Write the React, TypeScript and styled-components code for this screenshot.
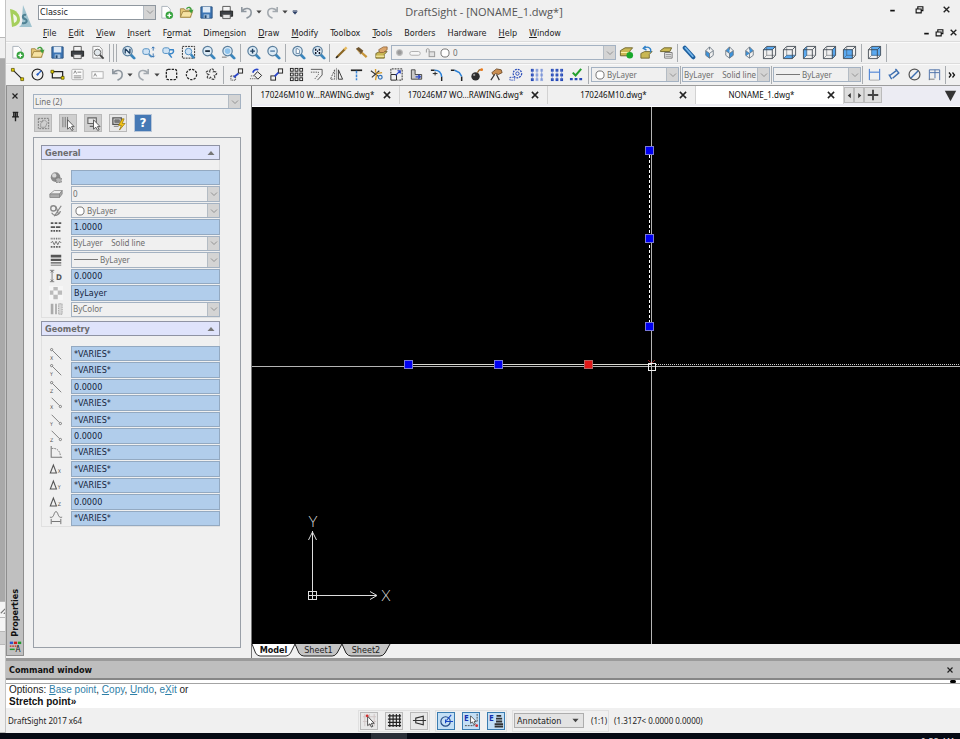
import React from 'react';
import styled, { createGlobalStyle, css } from 'styled-components';

const UI = '"DejaVu Sans Condensed", "DejaVu Sans", sans-serif';
const NARROW = '"Noto Sans", sans-serif';
const ARIAL = '"Liberation Sans", Arial, sans-serif';

const GlobalStyle = createGlobalStyle`
  *, *::before, *::after { box-sizing: border-box; }
  body { margin: 0; background: #f0f0f0; color: #222; font: 9px/12px ${UI}; }
  button, input, select { font: inherit; color: inherit; margin: 0; padding: 0; border-radius: 0; }
  button { background: none; border: 0; }
`;

/* ---------- icon drawings, 16 x 16 grid ---------- */

const dash = { fill: 'none', stroke: '#222', strokeDasharray: '2 1' };
const blueLine = { fill: 'none', stroke: '#2f6fd0' };

const Lens = ({ children }: { children?: React.ReactNode }) => (
  <g>
    <path d="M10.5 10.5 14 14" stroke="#3a86bd" strokeWidth="3" strokeLinecap="round" />
    <circle cx="7" cy="6.5" r="5" fill="#dcebf6" stroke="#5b7f9d" strokeWidth="1.3" />
    {children}
  </g>
);

const faces: Record<string, string> = {
  top: '2,5 5,2 14,2 11,5',
  bottom: '2,14 5,11 14,11 11,14',
  left: '2,5 5,2 5,11 2,14',
  right: '11,5 14,2 14,11 11,14',
  front: '2,5 11,5 11,14 2,14',
  back: '5,2 14,2 14,11 5,11',
};
const Cube = ({ face }: { face: string }) => (
  <g fill="none" stroke="#3a424b">
    <polygon points={faces[face]} fill="#5aa9f0" stroke="#5aa9f0" strokeWidth=".8" />
    <path d="M1.500 5h9.500v9.500H1.500zM1.500 5L5 1.500h9.500V11L11 14.500M11 5l3.500-3.500" strokeWidth=".9" />
    <path d="M5 2v9h9M5 11l-3.500 3.500" strokeWidth=".5" />
  </g>
);
const Iso = ({ fill }: { fill: string }) => (
  <g>
    <path d={fill} fill="#3c93dc" />
    <path d="M8 2l4 4v5l-4 3-4-3V6zM4 6l4 3 4-3M8 9v5M8 2v3" fill="none" stroke="#66727e" strokeWidth=".9" />
  </g>
);
const Dots = ({ first }: { first: string }) => (
  <g>
    {[2, 7, 12].map((x) =>
      [2, 7, 12].map((y) => <rect key={`${x}-${y}`} x={x} y={y} width="3" height="3" fill={x === 2 ? '#2448b8' : first} />),
    )}
    <path d="M3.500 2v12M8.500 2v12M13.500 2v12" stroke="#5b79c9" strokeWidth=".6" />
  </g>
);
const Pad = ({ fill = '#c9b753' }: { fill?: string }) => (
  <path d="M2 9l4-2h8l-3 3v4H2z" fill={fill} stroke="#6d6329" strokeWidth=".9" />
);
const NodeLine = ({ axis, end }: { axis: string; end: boolean }) => (
  <g fill="none" stroke="#666" strokeWidth=".9">
    <path d={end ? 'M3 2l9 9' : 'M4 4l10 10'} />
    <circle cx={end ? 13 : 3} cy={end ? 12 : 3} r="1.300" />
    <text x="1" y="14.500" fontSize="6" fill="#555" stroke="none">{axis}</text>
  </g>
);
const Delta = ({ axis }: { axis: string }) => (
  <g>
    <path d="M1.500 12.500L5 3.500l3.500 9z" fill="none" stroke="#555" strokeWidth="1.200" />
    <text x="10" y="13" fontSize="6" fill="#555">{axis}</text>
  </g>
);

const glyphs: Record<string, React.ReactNode> = {
  new: (<g><path d="M3 1.500h6l3 3V14H3z" fill="#fdfdfd" stroke="#aab2ba" /><circle cx="11" cy="11" r="4" fill="#37a33f" /><path d="M11 8.800v4.400M8.800 11h4.400" stroke="#fff" strokeWidth="1.400" /></g>),
  open: (<g><path d="M1.500 13V4h4l1 1.500h6V13z" fill="#e6c877" stroke="#a48a46" /><path d="M1.500 13l2.500-6h10.500L12 13z" fill="#f6e2a2" stroke="#a48a46" /><path d="M8 4c2-2.500 5-1.500 5 1.500" fill="none" stroke="#3f9d3c" strokeWidth="1.500" /><path d="M10.500 5h5L13 9z" fill="#3f9d3c" /></g>),
  save: (<g><path d="M2 2h12v12H2z" fill="#3c75b4" stroke="#2b5482" /><path d="M4 2h8v6H4z" fill="#dfeaf5" /><path d="M5 10h6v4H5z" fill="#a8c4df" /><path d="M6 11h2v3H6z" fill="#24486f" /></g>),
  print: (<g><path d="M4 1.500h8V7H4z" fill="#f4f4f4" stroke="#555" /><path d="M1.500 6.500h13V12h-13z" fill="#3b3f44" stroke="#222" /><path d="M4 10h8v4.500H4z" fill="#e4e4e4" stroke="#555" /></g>),
  preview: (<g><path d="M3 1.500h7l3 3V14H3z" fill="#fafafa" stroke="#999" /><circle cx="8" cy="8" r="3.500" fill="#e2e8ec" stroke="#666" /><path d="M10.500 10.500l4 4" stroke="#444" strokeWidth="2" /></g>),
  undo: <path d="M3 2v5h5M3 7c3-5 10-4 10 1 0 3-2 5-5 6" fill="none" stroke="#8f979f" strokeWidth="1.700" />,
  redo: <path d="M13 2v5H8M13 7C10 2 3 3 3 8c0 3 2 5 5 6" fill="none" stroke="#a3a9af" strokeWidth="1.700" />,
  zdyn: <Lens><path d="M4.500 4l5 5M9.500 4v5M4.500 4v5" stroke="#1d3d5e" strokeWidth="1.400" /></Lens>,
  zupdown: (<g><rect x="2" y="4" width="7" height="6" rx="2" fill="#cfe3f5" stroke="#4d8cc0" /><path d="M8.500 10l3 3" stroke="#4d8cc0" strokeWidth="2" /><path d="M13 2v4M13 9v4M11.500 3.500L13 2l1.500 1.500M11.500 11.500L13 13l1.500-1.500" stroke="#2f6fb0" fill="none" /></g>),
  zprev: (<g><rect x="2" y="3" width="7" height="6" rx="2" fill="#cfe3f5" stroke="#4d8cc0" /><path d="M9 9c4 1 5-2 4-4H9M8 9l3.500 4.500" stroke="#3a86c8" strokeWidth="1.600" fill="none" /></g>),
  zwin: (<g><rect x="1.500" y="1.500" width="13" height="12.500" {...dash} /><circle cx="8" cy="7" r="3.500" fill="#cfe3f5" stroke="#4d8cc0" /><path d="M10.500 10l3.500 4" stroke="#3a86bd" strokeWidth="2.500" /></g>),
  zout: <Lens><path d="M4.500 6.500h5" stroke="#123" strokeWidth="1.800" /></Lens>,
  zsel: <Lens><circle cx="7" cy="6.500" r="3" fill="#8ec3ec" /><path d="M1 13h5" stroke="#999" strokeWidth="1.500" /></Lens>,
  zin: <Lens><path d="M4.500 6.500h5M7 4v5" stroke="#1d3d5e" strokeWidth="1.500" /></Lens>,
  zout2: <Lens><path d="M4.500 6.500h5" stroke="#537ea6" strokeWidth="1.500" /></Lens>,
  zpage: <Lens><path d="M5.500 4h2l1.500 1.500V9H5.500z" fill="#fff" stroke="#4c6f92" strokeWidth=".8" /></Lens>,
  zfit: <Lens><path d="M5 4v2M5 7.500v2M9 4v2M9 7.500v2M6.500 6.700h1" stroke="#112" strokeWidth="1.600" /></Lens>,
  pencil: (<g><path d="M3 13L12 4" stroke="#8c6724" strokeWidth="2.400" /><path d="M11 5l2.500-2.500" stroke="#e6b95e" strokeWidth="2.500" /><path d="M2 14l2-2" stroke="#222" strokeWidth="1.500" /></g>),
  brush: (<g><path d="M8 8l5.500 5" stroke="#c79539" strokeWidth="2.500" /><path d="M2 4l3-2 5 4-3 4z" fill="#6f5530" /><path d="M3 5l4 4" stroke="#d9b774" /></g>),
  layer: (<g><Pad /><path d="M2 12h9" stroke="#efe39b" strokeWidth="1.500" /><path d="M5 5l5-3h4v3l-4 3H6z" fill="#dca66b" stroke="#8b5e31" strokeWidth=".8" /></g>),
  layerOk: (<g><path d="M1.500 6l5-3h8l-3 3.500v5h-10z" fill="#c9b753" stroke="#6d6329" /><path d="M2 8h9" stroke="#fff2b0" /><circle cx="11.500" cy="11" r="3.500" fill="#17a82b" /></g>),
  layerBack: (<g><Pad /><path d="M12 8c2-4-2-7-6-5M7 1L4.500 3.500 8 5.500" fill="none" stroke="#2f80c8" strokeWidth="1.400" /></g>),
  layerList: (<g><path d="M1.500 6l4-3h8l-2 4H1.500z" fill="#c9b753" stroke="#6d6329" /><path d="M6 8h8v6H6z" fill="#f1f1f1" stroke="#777" /><path d="M7 10h6M7 12h6" stroke="#888" /></g>),
  tube: (<g><path d="M3 3l9 10" stroke="#1d5f9e" strokeWidth="4.500" strokeLinecap="round" /><path d="M3.500 3l8 9" stroke="#74b6ec" strokeWidth="1.800" strokeLinecap="round" /></g>),
  isoL: <Iso fill="M4 6l4 3v5l-4-3z" />,
  isoT: <Iso fill="M8 2v7L4 6zM8 9l4-3v5l-4 3z" />,
  isoR: <Iso fill="M8 2l4 4-4 3zM4 6l4 3-4 3z" />,
  cubeTop: <Cube face="top" />, cubeBottom: <Cube face="bottom" />, cubeLeft: <Cube face="left" />,
  cubeRight: <Cube face="right" />, cubeFront: <Cube face="front" />, cubeBack: <Cube face="back" />,
  line: (<g><path d="M3 3l10 10" stroke="#222" strokeWidth="1.200" /><path d="M1.500 1.500h3v3h-3zM11.500 11.500h3v3h-3z" fill="#e8d400" stroke="#554d00" strokeWidth=".8" /></g>),
  circle: (<g fill="none"><circle cx="8" cy="8" r="5.800" stroke="#222" strokeWidth="1.200" /><path d="M8 8l4-4" stroke="#2a62c8" strokeWidth="1.400" /><path d="M6.500 8L8 6.500 9.500 8 8 9.500z" fill="#2a62c8" /></g>),
  rect: (<g><path d="M2.500 5h11v6.500h-11z" fill="none" stroke="#222" strokeWidth="1.300" /><path d="M1 3.500h3v3H1zM12 10h3v3h-3z" fill="#e8d400" stroke="#554d00" strokeWidth=".8" /></g>),
  note: (<g><rect x="2" y="2.500" width="12" height="11" rx="1" fill="#fbfbfb" stroke="#b0b0b0" /><path d="M4 7l1.500-3L7 7M8 5.500h4M4 9.500h8M4 11.500h8" stroke="#888" fill="none" /></g>),
  snote: (<g><rect x="2" y="5" width="12" height="7" fill="#fbfbfb" stroke="#b0b0b0" /><path d="M4 10l1.500-3L7 10" stroke="#888" fill="none" /></g>),
  selRect: <rect x="2.500" y="2.500" width="11" height="11" rx="2" {...dash} strokeDasharray="2.500 1.200" strokeWidth="1.400" />,
  selCirc: <circle cx="8" cy="8" r="5.500" {...dash} strokeDasharray="2.500 1.200" strokeWidth="1.300" />,
  selPoly: <path d="M6 5c0-4 5-4 4 0 4-1 5 3 1 4 2 4-2 6-4 2-3 3-5 0-2-3-4-1-3-5 1-3z" fill="none" stroke="#444" strokeWidth="1.300" strokeDasharray="3 1" />,
  move: (<g><rect x="10" y="2" width="4.500" height="4.500" fill="none" stroke="#222" /><rect x="2" y="9.500" width="5" height="4.500" {...dash} strokeDasharray="1 1" /><path d="M5 11l5-4" stroke="#2a46c8" strokeWidth="2" /></g>),
  rotate: (<g><path d="M9 5l4.500 4L9.500 13l-4-4z" fill="none" stroke="#222" /><path d="M4 6c1-3 4-4 6-3" stroke="#2a46c8" strokeWidth="1.800" fill="none" /><path d="M1 12.500h7M2 9.500h3" stroke="#444" strokeDasharray="1 1" /></g>),
  copy: (<g fill="none"><rect x="10" y="2" width="4.500" height="4.500" stroke="#222" /><rect x="2" y="9.500" width="5" height="4.500" stroke="#222" /><path d="M6 10l4-4" stroke="#2a46c8" strokeWidth="2" /></g>),
  pattern: (<g fill="none" stroke="#222">{[2, 7, 12].map((x) => [2, 7, 12].map((y) => <rect key={`${x}${y}`} x={x - 0.5} y={y - 0.5} width="3" height="3" />))}</g>),
  offset: (<g fill="none"><path d="M2 2.500h12v6L9 14" stroke="#555" /><path d="M2 5.500h8V8l-4 5" {...dash} stroke="#555" strokeDasharray="1.500 1" /></g>),
  mirror: (<g fill="none"><path d="M6 3v10H1.500z" {...dash} stroke="#555" /><path d="M10 3v10h4.500z" stroke="#333" /><path d="M8 1v13" stroke="#999" /></g>),
  tee: (<g><path d="M2 3.500h12" stroke="#222" strokeWidth="1.800" /><path d="M8 4v10" stroke="#3a86d8" strokeWidth="1.600" strokeDasharray="3 1" /></g>),
  scissors: (<g fill="none"><path d="M2 4l8 6M3 11l8-7" stroke="#333" strokeWidth="1.200" /><circle cx="12" cy="11" r="2" stroke="#3272b8" strokeWidth="1.300" /><path d="M8 7l6-1M8 8l-1 6M7 2v4" stroke="#d39a2a" strokeWidth="1.500" /></g>),
  scale: (<g fill="none"><path d="M2 7V2h12v12H9" {...dash} /><path d="M2 8h6v6H2z" stroke="#222" /><path d="M7 9l5-5M9 4h3v3" stroke="#2a46c8" strokeWidth="1.300" /></g>),
  stretch: (<g><path d="M2.500 3h4v5h7v5h-11z" fill="#c9c9c9" stroke="#444" /><path d="M7 10.500h5M10 8.500l2 2-2 2" stroke="#2a46c8" fill="none" strokeWidth="1.300" /></g>),
  fillet: (<g fill="none" strokeWidth="1.500"><path d="M2 3.500h4M13.500 10v5" stroke="#222" /><path d="M6 3.500c5 0 7 2 7.500 7" stroke="#2c82d8" /><path d="M4 7h5M6.500 5v4" stroke="#222" strokeWidth="1" /></g>),
  chamfer: (<g fill="none" strokeWidth="1.600"><path d="M2 3.500h4M13.500 10v5" stroke="#222" /><path d="M6 3.500l5 2.500 2.500 4" stroke="#2c82d8" /></g>),
  bomb: (<g><circle cx="7" cy="10" r="4.500" fill="#2d2d2d" /><path d="M9 6l2-3h2" stroke="#8a5a1c" fill="none" strokeWidth="1.300" /><circle cx="13.500" cy="2.800" r="1.500" fill="#ea7a1b" /><circle cx="5.500" cy="8.500" r="1.200" fill="#999" /></g>),
  hand: (<g><path d="M3 6l5-4 5 1 1 3-4 2-3-1-2 2z" fill="#c98e52" stroke="#5c3a18" strokeWidth=".8" /><path d="M6 8l-4 6M8 8l3 6" stroke="#333" strokeWidth="1.300" /></g>),
  target: (<g fill="none" stroke="#2448b8"><circle cx="9" cy="7" r="4.500" strokeDasharray="2 1" strokeWidth="1.300" /><circle cx="9" cy="7" r="1.800" /><path d="M1 11h5v3H1z" strokeDasharray="1.500 1" /></g>),
  dotsA: <Dots first="#9fb2e2" />,
  dotsB: <Dots first="#2448b8" />,
  check: (<g><path d="M4 6l3 3 6-7" fill="none" stroke="#23a12e" strokeWidth="2.200" /><path d="M1 13h3M6 13h3M11 13h3" stroke="#2448b8" strokeWidth="2.500" /></g>),
  dimH: (<g {...blueLine}><path d="M2.500 2v12M13.500 2v12M3 5.500h10" /><path d="M3 14h10" stroke="#aaa" /></g>),
  dimA: (<g {...blueLine}><path d="M2 8l3 5M9 2l4 5M3 9l8-6M6 12l7-6" stroke="#3c6eb0" strokeWidth="1.500" /></g>),
  dimD: (<g fill="none"><circle cx="8" cy="8" r="5.800" stroke="#555" strokeWidth="1.300" /><path d="M4 12l8-8" stroke="#3c6eb0" strokeWidth="1.500" /></g>),
  dimO: (<g {...blueLine}><path d="M2.500 14V3h11v11M8.500 3v9M3 6h10" stroke="#4b6fa8" /><path d="M8 13H2" stroke="#777" /></g>),
  grid: <path d="M3 1v14M6.500 1v14M10 1v14M13.500 1v14M1 3h14M1 6.500h14M1 10h14M1 13.500h14" stroke="#222" strokeWidth="1.200" fill="none" />,
  snap: (<g><path d="M3 1v13M8 1v13M13 1v13M1 4h14M1 9h14" stroke="#cfc4c4" /><path d="M6 3.500v10l2.500-2 1.500 3.500 1.500-.7L10 11h3z" fill="#fff" stroke="#333" strokeWidth=".9" /><circle cx="5.500" cy="3" r="1.500" fill="#d23030" /></g>),
  ortho: (<g fill="none" stroke="#333"><path d="M4 5.500l8-2v9l-8-2zM1 8h14" strokeWidth="1.200" /></g>),
  polar: (<g fill="none"><circle cx="7" cy="9" r="5" stroke="#234a86" strokeWidth="1.200" /><path d="M7 9h8M8 8l5-6M7 7v4" stroke="#1746c6" strokeWidth="1.200" /></g>),
  esnap: (<g><text x="0" y="8" fontSize="9" fontWeight="bold" fill="#1530b0">E</text><path d="M7 3v8l2-1.500 1.500 3 1.500-.7-1.200-2.800H13z" fill="#fff" stroke="#333" strokeWidth=".8" /><path d="M1 13.500h10M14 1v9" stroke="#444" strokeDasharray="2 1" /><circle cx="13.500" cy="13.500" r="1.500" fill="#d23030" /></g>),
  etrack: (<g><text x="0" y="8" fontSize="9" fontWeight="bold" fill="#1530b0">E</text><path d="M8 3h5M7.500 6H14M7.500 9H14M6 12h9M6 14.500h9" stroke="#333" strokeWidth="2" /></g>),
  pickAdd: (<g><rect x="2.500" y="2.500" width="11" height="11" fill="none" stroke="#777" strokeDasharray="2 1" /><path d="M4 6h3V4M9 4l3 3-2 5H5V8z" fill="none" stroke="#999" /></g>),
  pickLines: (<g><path d="M2 1v11M4.500 1v11M7 1v5" stroke="#777" /><path d="M7 4v10l2.500-2 2 3.500 1.500-.8-1.800-3.400H14z" fill="#fff" stroke="#555" /></g>),
  pickMon: (<g><path d="M2 2h9v6H2zM4 11h4" fill="#e3e3e3" stroke="#666" strokeWidth="1.200" /><path d="M8 4v10l2.500-2 2 3.500 1.500-.8-1.800-3.400H15z" fill="#fff" stroke="#555" /></g>),
  flash: (<g><path d="M2 2h9v7H2z" fill="#e3e3e3" stroke="#555" strokeWidth="1.400" /><path d="M4 4h5v3H4zM3 11h5" fill="#777" stroke="#777" /><path d="M12 3L8 10h3l-2 5 6-7h-3l2-5z" fill="#f5c518" stroke="#8d6c00" strokeWidth=".7" /></g>),
  ball: (<g><circle cx="7.500" cy="7" r="5.500" fill="#8a8a8a" /><circle cx="6" cy="5" r="2.500" fill="#d8d8d8" /><path d="M8 8h6v5H8z" fill="#b5b5b5" stroke="#777" strokeDasharray="2 1" /></g>),
  slab: (<g><path d="M1 8l5-4h9l-3 4z" fill="#eee" stroke="#999" /><path d="M1 8h11v4H1zM12 8l3-4v4l-3 4z" fill="#aaa" stroke="#888" /></g>),
  palette: (<g fill="none" stroke="#888"><circle cx="5" cy="5" r="3" strokeWidth="1.500" /><path d="M14 2L6 14M8 3l3 9M3 10c3 5 9 3 10-2" strokeWidth="1.400" /></g>),
  ltScale: (<g stroke="#555" strokeWidth="2"><path d="M2 3.500h12" strokeDasharray="3 1.500" /><path d="M2 8h12" strokeDasharray="5 1" /><path d="M2 12.500h12" strokeDasharray="2 1" /></g>),
  ltype: (<g fill="none" stroke="#666"><path d="M2 3h12" strokeDasharray="1 1" strokeWidth="2" /><path d="M2 8l2-2 2 4 2-4 2 4 2-4 2 2" /><path d="M2 12.500h12" strokeDasharray="2 1" strokeWidth="2" /></g>),
  weight: <path d="M2 2h12v3H2zM2 6.500h12v2.500H2zM2 10.500h12v1.500H2zM2 13.300h12v1H2z" fill="#555" />,
  thick: (<g><path d="M1 1.500h5M1 14.500h5M3.500 2v12M2 4l1.500-2L5 4M2 12l1.500 2L5 12" stroke="#777" fill="none" /><text x="8" y="12" fontSize="9" fontWeight="bold" fill="#555">D</text></g>),
  checker: (<g fill="#bbb"><rect width="16" height="16" fill="#f6f6f6" /><path d="M5 1h5v4H5zM1 5h4v5H1zM10 5h5v5h-5zM5 10h5v5H5z" /></g>),
  bars: (<g><path d="M2 2h3v12H2zM7 2h2v12H7z" fill="#aaa" /><path d="M11 14V2h4v12z" fill="#d6d6d6" stroke="#888" strokeDasharray="1 1" /></g>),
  angle: (<g fill="none" stroke="#777"><path d="M2.500 1v13H15" strokeWidth="1.200" /><path d="M3 4c6-1 10 3 10 9" strokeDasharray="2 1" /></g>),
  length: (<g fill="none" stroke="#666"><path d="M1 7c3 1 4-1 5-4 1-3 3-3 4 0 1 3 2 5 5 4" /><path d="M2.500 9v6M13.500 9v6M3 12h10" /></g>),
  props: (<g><path d="M1 2h4v3H1z" fill="#2b56d0" /><path d="M6 2h4v3H6z" fill="#cc1f1f" /><path d="M11 2h4v3h-4z" fill="#1f9a2c" /><path d="M1 7.500h9" stroke="#cc1f1f" strokeWidth="1.500" strokeDasharray="2 1" /><path d="M1 11.500h6" stroke="#1f9a2c" strokeWidth="1.800" /><text x="8" y="15" fontSize="10" fill="#111">A</text></g>),
  pin: <path d="M4 2h8M5.500 2v6M10.500 2v6M8 2v6M3 8.500h10M8 9v6" stroke="#222" strokeWidth="2" fill="none" />,
  close: <path d="M3 3l10 10M13 3L3 13" stroke="#222" strokeWidth="2.400" fill="none" />,
  min: <path d="M4 10h8" stroke="#111" strokeWidth="3" />,
  restore: <path d="M5 6V3h9v7h-3M2 7h9v7H2z" fill="none" stroke="#111" strokeWidth="2" />,
  plus: <path d="M8 1v14M1 8h14" stroke="#444" strokeWidth="2.500" />,
  left: <path d="M11 2v12L4 8z" fill="#333" />,
  right: <path d="M5 2v12l7-6z" fill="#333" />,
  down: <path d="M1 4h14l-7 8z" fill="#444" />,
  bigDown: <path d="M1 2h14L8 15z" fill="#333" />,
  up: <path d="M1 12h14L8 4z" fill="#777" />,
  chev: <path d="M2 5l6 6 6-6" fill="none" stroke="currentColor" strokeWidth="1.800" />,
  more: <path d="M2 3l4 5-4 5M9 3l4 5-4 5" fill="none" stroke="#111" strokeWidth="2.500" />,
  overflow: <path d="M2 4h12M2 7h12l-6 7z" fill="#2b3f66" stroke="#2b3f66" strokeWidth="1.500" />,
  ring: <circle cx="8" cy="8" r="6.500" fill="#fff" stroke="#666" strokeWidth="1.400" />,
  bulb: <circle cx="8" cy="8" r="5" fill="#999" stroke="#bbb" strokeWidth="2" />,
  cloud: <rect x="1" y="6" width="14" height="5" rx="2.500" fill="#f6f6f6" stroke="#aaa" strokeWidth="1.200" />,
  lock: (<g fill="none" stroke="#999" strokeWidth="1.400"><path d="M2 8V4c0-2 4-2 4 0v3" /><rect x="6" y="7" width="8" height="7" fill="#e2e2e2" /></g>),
  grip: <path d="M1 15L15 1M5 16L16 5" stroke="#777" strokeWidth="1.500" />,
};

[['x', 'X'], ['y', 'Y'], ['z', 'Z']].forEach(([k, axis]) => {
  glyphs[`start-${k}`] = <NodeLine axis={axis} end={false} />;
  glyphs[`end-${k}`] = <NodeLine axis={axis} end />;
  glyphs[`delta-${k}`] = <Delta axis={axis} />;
});

const Svg = styled.svg<{ $s: number }>`
  display: block;
  flex: none;
  width: ${(p) => p.$s}px;
  height: ${(p) => p.$s}px;
`;
const Icon = ({ name, size = 15 }: { name: string; size?: number }) => (
  <Svg $s={size} viewBox="0 0 16 16" aria-hidden="true">{glyphs[name]}</Svg>
);

/* ---------- shared parts ---------- */

const Row = styled.div`
  display: flex;
  align-items: center;
`;
const Tool = styled.button<{ $w?: number }>`
  flex: none;
  width: ${(p) => p.$w ?? 20}px;
  height: 20px;
  display: grid;
  place-items: center;
  &:hover { background: #dce8f4; }
`;
const Rule = styled.span<{ $m?: number }>`
  flex: none;
  width: 1px;
  height: 18px;
  margin: 0 ${(p) => p.$m ?? 1}px;
  background: #a9adb1;
`;
const ComboBox = styled.span<{ $w?: number; $dark?: boolean }>`
  display: flex;
  align-items: center;
  flex: ${(p) => (p.$w ? `0 0 ${p.$w}px` : '1 1 auto')};
  min-width: 0;
  height: 15px;
  border: 1px solid ${(p) => (p.$dark ? '#8f979f' : '#a4b2c2')};
  background: ${(p) => (p.$dark ? '#fff' : '#f0f0f0')};
  color: ${(p) => (p.$dark ? '#222' : '#6e6e6e')};
  select {
    flex: 1;
    min-width: 0;
    height: 100%;
    padding-left: 1px;
    border: 0;
    background: none;
    appearance: none;
    outline: none;
    ${(p) => !p.$dark && css`font: 8px/12px ${NARROW};`}
  }
`;
const SelectionCombo = styled(ComboBox)`
  flex: none;
`;
const ComboArrow = styled.span`
  flex: none;
  width: 12px;
  height: 100%;
  display: grid;
  place-items: center;
  background: #d4d4d4;
  border-left: 1px solid #b4bcc4;
  color: #8b8b8b;
`;
const Stroke = styled.span`
  flex: none;
  width: 24px;
  height: 1px;
  margin: 0 1px 0 2px;
  background: #777;
`;
type ComboProps = { label: string; value: string; w?: number; dark?: boolean; lead?: React.ReactNode };
const Combo = ({ label, value, w, dark, lead }: ComboProps) => (
  <ComboBox $w={w} $dark={dark}>
    {lead}
    <select aria-label={label}><option>{value}</option></select>
    <ComboArrow><Icon name="chev" size={8} /></ComboArrow>
  </ComboBox>
);
const Tools = ({ names }: { names: string[] }) => (
  <>{names.map((n, i) => <Tool key={i} aria-label={n}><Icon name={n} /></Tool>)}</>
);

/* ---------- frame ---------- */

const Page = styled.div`
  display: flex;
  flex-direction: column;
  min-height: 100vh;
`;
const Desktop = styled.div`
  flex: 1;
  display: flex;
`;
const Sliver = styled.div`
  flex: none;
  width: 6px;
  display: grid;
  grid-template-rows: 38px 21px 1fr 16px 14px 13px 88px;
  border-right: 1px solid #c4c4c4;
  background: #f4f4f4;
  overflow: hidden;
`;
const SliverPart = styled.span<{ $bg: string }>`
  background: ${(p) => p.$bg};
  border-bottom: 1px solid #b8b8b8;
`;
const AppWindow = styled.div`
  flex: 1;
  min-width: 0;
  display: flex;
  flex-direction: column;
  background: #f0f0f0;
`;
const Header = styled.header`
  display: grid;
  grid-template-columns: 31px 1fr;
`;
const Logo = styled.svg`
  width: 24px;
  height: 25px;
  margin: 5px 0 0 3px;
`;
const TitleRow = styled.div`
  display: grid;
  grid-template-columns: 1fr auto 1fr;
  align-items: center;
  height: 24px;
  margin-left: -31px;
  padding-left: 32px;
`;
const Quick = styled(Row)`
  height: 22px;
  margin-right: -20px;
`;
const Title = styled.h1`
  margin: 0 30px 0 0;
  font: 11px/20px "Open Sans", sans-serif;
  color: #555;
`;
const Controls = styled(Row)`
  justify-content: flex-end;
  margin-left: auto;
  height: 18px;
`;
const WindowControls = styled(Controls)`
  align-self: start;
`;
const MenuRow = styled(Row)`
  height: 17px;
`;
const MenuItem = styled.button`
  padding: 0 6px;
  height: 17px;
  white-space: pre;
`;
const ToolRow = styled(Row)`
  height: 22px;
  padding-left: 1px;
  border-top: 1px solid #dcdcdc;
  box-shadow: inset 0 1px #fafafa;
`;
const Workspace = styled.div`
  flex: 1;
  display: flex;
  border-top: 1px solid #9c9c9c;
`;

/* ---------- properties palette ---------- */

const Strip = styled.div`
  flex: none;
  width: 18px;
  margin-bottom: 2px;
  display: flex;
  flex-direction: column;
  align-items: center;
  background: #c0c0c0;
  border: 1px solid #8e8e8e;
  border-top: 0;
`;
const StripTitle = styled.span`
  margin-top: auto;
  writing-mode: vertical-rl;
  rotate: 180deg;
  font-weight: bold;
  color: #111;
`;
const StripMenu = styled(Tool)`
  height: 18px;
`;
const Palette = styled.section`
  flex: none;
  width: 227px;
  display: flex;
  flex-direction: column;
  padding: 8px 10px 10px 9px;
`;
const PickRow = styled(Row)`
  gap: 7px;
  padding: 5px 0 5px 1px;
`;
const Square = styled.button<{ $on?: boolean; $plain?: boolean }>`
  flex: none;
  width: 18px;
  height: 18px;
  display: grid;
  place-items: center;
  background: ${(p) => (p.$on ? '#c4dff5' : p.$plain ? '#e8e8e8' : '#cfcfcf')};
  border: 1px solid ${(p) => (p.$on ? '#3a7cb0' : '#b9b9b9')};
`;
const Help = styled(Square)`
  background: #4679b5;
  border: 1px solid #b8c6d8;
  color: #fff;
  font: bold 12px/14px "DejaVu Sans", sans-serif;
`;
const PaletteBox = styled.div`
  flex: 1;
  border: 1px solid #9aa0a8;
  padding: 7px 20px 0 7px;
  display: flex;
  flex-direction: column;
  gap: 3px;
`;
const Group = styled.section`
  border: 1px solid #e0e0e0;
  border-top: 0;
`;
const GroupHead = styled.button`
  width: calc(100% + 2px);
  height: 15px;
  margin: 0 -1px;
  padding: 0 4px 0 3px;
  display: flex;
  align-items: center;
  justify-content: space-between;
  background: #dfe3fb;
  border: 1px solid #8f93a4;
  font-weight: bold;
  color: #6c6c6c;
`;
const Fields = styled.div<{ $h: number }>`
  display: grid;
  grid-auto-rows: 1fr;
  row-gap: 1px;
  height: ${(p) => p.$h}px;
  margin: 10px -1px 0 0;
`;
const Field = styled.label`
  display: grid;
  grid-template-columns: 29px 1fr;
  align-items: stretch;
  min-height: 0;
  > svg { align-self: center; margin-left: 7px; }
  > input {
    width: 100%;
    min-width: 0;
    padding: 0 2px;
    background: #b1cdeb;
    border: 1px solid #93a9c1;
    color: #14243c;
    outline: none;
  }
  > span { height: 100%; }
`;

type FieldSpec = { icon: string; label: string; value: string; combo?: boolean; lead?: React.ReactNode };
const LINE_STYLE = 'ByLayer\u00a0\u00a0\u00a0 Solid line';
const general: FieldSpec[] = [
  { icon: 'ball', label: 'Hyperlink', value: '' },
  { icon: 'slab', label: 'Layer', value: '0', combo: true },
  { icon: 'palette', label: 'Color', value: 'ByLayer', combo: true, lead: 'ring' },
  { icon: 'ltScale', label: 'Line scale', value: '1.0000' },
  { icon: 'ltype', label: 'Line style', value: LINE_STYLE, combo: true },
  { icon: 'weight', label: 'Line weight', value: 'ByLayer', combo: true, lead: 'stroke' },
  { icon: 'thick', label: 'Thickness', value: '0.0000' },
  { icon: 'checker', label: 'Transparency', value: 'ByLayer' },
  { icon: 'bars', label: 'Print style', value: 'ByColor', combo: true },
];
const V = '*VARIES*';
const geometry: FieldSpec[] = [
  { icon: 'start-x', label: 'Start X', value: V },
  { icon: 'start-y', label: 'Start Y', value: V },
  { icon: 'start-z', label: 'Start Z', value: '0.0000' },
  { icon: 'end-x', label: 'End X', value: V },
  { icon: 'end-y', label: 'End Y', value: V },
  { icon: 'end-z', label: 'End Z', value: '0.0000' },
  { icon: 'angle', label: 'Angle', value: V },
  { icon: 'delta-x', label: 'Delta X', value: V },
  { icon: 'delta-y', label: 'Delta Y', value: V },
  { icon: 'delta-z', label: 'Delta Z', value: '0.0000' },
  { icon: 'length', label: 'Length', value: V },
];
const Lead = styled.span`
  margin: 0 1px 0 3px;
`;
const LayerState = styled(Row)`
  gap: 4px;
  margin-right: 2px;
`;
const ring = <Lead><Icon name="ring" size={10} /></Lead>;

const PropertyGroup = ({ title, items, height }: { title: string; items: FieldSpec[]; height: number }) => (
  <Group>
    <GroupHead>{title}<Icon name="up" size={8} /></GroupHead>
    <Fields $h={height}>
      {items.map((f) => (
        <Field key={f.label}>
          <Icon name={f.icon} size={14} />
          {f.combo
            ? <Combo label={f.label} value={f.value} lead={f.lead === 'ring' ? ring : f.lead === 'stroke' ? <Stroke /> : undefined} />
            : <input aria-label={f.label} defaultValue={f.value} />}
        </Field>
      ))}
    </Fields>
  </Group>
);

/* ---------- documents ---------- */

const Docs = styled.main`
  flex: 1;
  min-width: 0;
  display: flex;
  flex-direction: column;
  border-left: 1px solid #777;
`;
const TabRow = styled(Row)`
  height: 21px;
  padding-bottom: 2px;
  background: #ececf3;
  border-bottom: 1px solid #fff;
`;
const DocTab = styled.div<{ $active?: boolean }>`
  flex: 0 1 148px;
  height: 100%;
  display: flex;
  align-items: center;
  background: ${(p) => (p.$active ? '#fff' : '#f0f0f0')};
  border-right: 1px solid #d2d2d2;
`;
const DocName = styled.button`
  flex: 1;
  min-width: 0;
  padding-left: 4px;
  white-space: nowrap;
  font: 8px/14px ${NARROW};
  color: #111;
`;
const CloseTab = styled.button`
  width: 20px;
  height: 16px;
  padding-right: 4px;
  display: grid;
  place-items: center;
`;
const NavTab = styled.button<{ $w: number }>`
  width: ${(p) => p.$w}px;
  height: 16px;
  display: grid;
  place-items: center;
  background: #dedede;
  border: 1px solid #bbb;
`;
const TabList = styled.button`
  margin: 0 3px 0 auto;
`;
const Drawing = styled.div`
  flex: 1;
  min-height: 0;
  background: #000;
  display: grid;
  svg { width: 100%; height: 100%; display: block; }
`;
const SheetRow = styled.div`
  display: flex;
  height: 14px;
`;
const Sheet = styled.button<{ $w: number; $active?: boolean }>`
  position: relative;
  width: ${(p) => p.$w}px;
  height: 12px;
  line-height: 13px;
  ${(p) => p.$active && css`font-weight: bold; color: #111;`}
  svg { position: absolute; inset: 0; width: 100%; height: 100%; overflow: visible; }
  span { position: relative; }
`;

const Grip = ({ x, y, hot }: { x: number; y: number; hot?: boolean }) => (
  <rect x={x - 4} y={y - 4} width="8" height="8" fill={hot ? '#e01818' : '#0000f0'} stroke={hot ? '#b86060' : '#7878d8'} />
);
const ModelView = () => (
  <Drawing>
    <svg role="img" aria-label="Model drawing" shapeRendering="crispEdges">
      <g stroke="#b4b4b4">
        <line x1="399.5" y1="0" x2="399.5" y2="100%" />
        <line x1="0" y1="259.5" x2="100%" y2="259.5" />
      </g>
      <line x1="397.5" y1="43" x2="397.5" y2="219" stroke="#fff" strokeDasharray="3 2" />
      <line x1="156" y1="257.5" x2="400" y2="257.5" stroke="#d8d8d0" />
      <line x1="404" y1="257.5" x2="100%" y2="257.5" stroke="#ccc" strokeDasharray="1 1" />
      <Grip x={397.5} y={43.5} /><Grip x={397.5} y={131.5} /><Grip x={397.5} y={219.5} />
      <Grip x={156.5} y={257.5} /><Grip x={246.5} y={257.5} /><Grip x={336.5} y={257.5} hot />
      <path d="M396 253l3 3M403 253l-3 3" stroke="#8c2020" />
      <rect x="396.5" y="256.5" width="7" height="7" fill="none" stroke="#eee" />
      <g stroke="#ddd" fill="none">
        <path d="M60.500 493V424M56 488.500h68M56.500 484.500h8v8h-8z" />
        <path d="M56.500 433l4-8 4 8M118 484.500l7 4-7 4" shapeRendering="auto" />
      </g>
      <g fill="#ddd" fontFamily="Lato, sans-serif" fontSize="15" fontWeight="300" textAnchor="middle">
        <text x="61" y="420">Y</text>
        <text x="134" y="494">X</text>
      </g>
    </svg>
  </Drawing>
);

/* ---------- command window and status bar ---------- */

const CommandHead = styled.div`
  display: flex;
  align-items: center;
  justify-content: space-between;
  height: 22px;
  padding: 0 3px;
  background: #bebebe;
  border-top: 3px solid #9a9a9a;
  border-bottom: 2px solid #868686;
  color: #111;
  font: bold 9px/16px ${UI};
`;
const Splitter = styled.div`
  height: 4px;
  background: #fff;
  border-bottom: 1px solid #a4a4a4;
  display: flex;
  justify-content: flex-end;
  padding-right: 4px;
  &::after { content: ''; width: 6px; height: 3px; border-radius: 2px; background: #000; }
`;
const CommandLog = styled.div`
  height: 24px;
  padding-left: 3px;
  background: #fff;
  font: 10px/12px ${ARIAL};
  color: #222;
  a { color: #2f80a8; text-decoration: none; }
  p { margin: 0; }
  strong { color: #111; }
`;
const Status = styled.footer`
  display: flex;
  align-items: center;
  height: 25px;
  font: 8px/12px ${NARROW};
`;
const StatusText = styled.span`
  flex: 0 0 352px;
  padding-left: 2px;
`;
const Cluster = styled.div`
  display: flex;
  align-items: center;
  gap: 7px;
  height: 22px;
  margin-right: 5px;
  padding: 0 1px;
  border: 1px solid #e0e0e0;
`;
const Annotation = styled.label`
  display: flex;
  align-items: center;
  width: 70px;
  height: 15px;
  padding-right: 4px;
  border: 1px solid #adadad;
  background: #e3e3e3;
  font: 9px/12px ${UI};
  select { flex: 1; min-width: 0; padding-left: 2px; background: none; border: 0; appearance: none; }
`;
const Taskbar = styled.div`
  height: 6px;
  padding: 3px 6px 0 0;
  overflow: hidden;
  background: linear-gradient(90deg, #060a14 371px, #2a2e38 371px, #2a2e38 407px, #060a14 407px);
  color: #ddd;
  text-align: right;
`;

const menus = ['_File', '_Edit', '_View', '_Insert', 'F_ormat', 'Dime_nsion', '_Draw', '_Modify', 'Toolbox', '_Tools', 'Borders', 'Hardware', '_Help', '_Window'];
const Mnemonic = ({ text }: { text: string }) => {
  const i = text.indexOf('_');
  return i < 0 ? <>{text}</> : <>{text.slice(0, i)}<u>{text[i + 1]}</u>{text.slice(i + 2)}</>;
};
const tabs = ['170246M10 W...RAWING.dwg*', '170246M7 WO...RAWING.dwg*', '170246M10.dwg*', 'NONAME_1.dwg*'];
const sheets: [string, number][] = [['Model', 43], ['Sheet1', 47], ['Sheet2', 48]];

export default function App() {
  return (
    <Page>
      <GlobalStyle />
      <Desktop>
        <Sliver>
          <SliverPart $bg="#ffffff" /><SliverPart $bg="#f0f0f0" /><SliverPart $bg="#a9a9a9" />
          <SliverPart $bg="#f4f4f4"><Icon name="grip" size={12} /></SliverPart>
          <SliverPart $bg="#f4f4f4" /><SliverPart $bg="#d0d0d0" /><SliverPart $bg="#f0f0f0" />
        </Sliver>
        <AppWindow>
          <Header>
            <Logo viewBox="0 0 24 25" aria-label="DraftSight">
              <path d="M1 4c6 1 10 5 10 11 0 3-3 6-8 7z" fill="#a5cf5c" />
              <path d="M4 9c3 1 4 3 4 5s-1 3-3 4z" fill="#f3f6ea" />
              <path d="M14 0l9 22H10c3-2 4-5 3-9z" fill="#9fc3cf" />
              <path d="M17 10c-4-1-4 3-1 4s2 5-3 4" fill="none" stroke="#4f8294" strokeWidth="2" />
            </Logo>
            <div>
              <TitleRow>
                <Quick>
                  <Combo label="Workspace" value="Classic" w={118} dark />
                  <Tools names={['new', 'open', 'save', 'print', 'undo']} />
                  <Tool $w={6} aria-label="Undo list"><Icon name="down" size={6} /></Tool>
                  <Tool aria-label="Redo"><Icon name="redo" /></Tool>
                  <Tool $w={6} aria-label="Redo list"><Icon name="down" size={6} /></Tool>
                  <Tool $w={14} aria-label="Customize"><Icon name="overflow" size={6} /></Tool>
                </Quick>
                <Title>DraftSight - [NONAME_1.dwg*]</Title>
                <WindowControls>
                  <Tool $w={27} aria-label="Minimize"><Icon name="min" size={9} /></Tool>
                  <Tool $w={27} aria-label="Restore"><Icon name="restore" size={9} /></Tool>
                  <Tool $w={27} aria-label="Close"><Icon name="close" size={9} /></Tool>
                </WindowControls>
              </TitleRow>
              <MenuRow>
                {menus.map((m) => <MenuItem key={m}><Mnemonic text={m} /></MenuItem>)}
                <Controls>
                  <Tool $w={13} aria-label="Minimize document"><Icon name="min" size={9} /></Tool>
                  <Tool $w={13} aria-label="Restore document"><Icon name="restore" size={9} /></Tool>
                  <Tool $w={14} aria-label="Close document"><Icon name="close" size={9} /></Tool>
                </Controls>
              </MenuRow>
            </div>
          </Header>
          <ToolRow>
            <Tools names={['new', 'open', 'save', 'print', 'preview']} />
            <Rule $m={2} /><Rule $m={1} /><Rule $m={1} />
            <Tools names={['zdyn', 'zupdown', 'zprev', 'zwin', 'zout', 'zsel']} />
            <Rule $m={2} />
            <Tools names={['zin', 'zout2']} />
            <Rule $m={2} />
            <Tools names={['zpage', 'zfit']} />
            <Rule $m={1} />
            <Tools names={['pencil', 'brush', 'layer']} />
            <Combo
              label="Layer" value="0" w={225}
              lead={<LayerState><Lead><Icon name="bulb" size={9} /></Lead><Icon name="cloud" size={12} /><Icon name="lock" size={11} /><Icon name="ring" size={10} /></LayerState>}
            />
            <Tools names={['layerOk', 'layerBack', 'layerList']} />
            <Rule />
            <Tools names={['tube', 'isoL', 'isoT', 'isoR', 'cubeTop', 'cubeBottom', 'cubeLeft', 'cubeRight', 'cubeFront']} />
            <Rule $m={2} />
            <Tools names={['cubeBack']} />
            <Rule $m={2} />
          </ToolRow>
          <ToolRow>
            <Tools names={['line', 'circle', 'rect', 'note', 'snote', 'undo']} />
            <Tool $w={6} aria-label="Undo list"><Icon name="down" size={6} /></Tool>
            <Tool aria-label="Redo"><Icon name="redo" /></Tool>
            <Tool $w={8} aria-label="Redo list"><Icon name="down" size={6} /></Tool>
            <Tools names={['selRect', 'selCirc', 'selPoly']} />
            <Rule $m={2} />
            <Tools names={['move', 'rotate', 'copy', 'pattern', 'offset', 'mirror', 'tee', 'scissors', 'scale', 'stretch', 'fillet', 'chamfer', 'bomb', 'hand', 'target', 'dotsA', 'dotsB', 'check']} />
            <Rule $m={2} />
            <Combo label="Color" value="ByLayer" w={88} lead={ring} />
            <Rule $m={1} />
            <Combo label="Line style" value={LINE_STYLE} w={88} />
            <Rule $m={1} />
            <Combo label="Line weight" value="ByLayer" w={88} lead={<Stroke />} />
            <Rule />
            <Tools names={['dimH', 'dimA', 'dimD', 'dimO']} />
            <Rule $m={1} />
            <Tool $w={10} aria-label="More tools"><Icon name="more" size={8} /></Tool>
          </ToolRow>
          <Workspace>
            <Strip>
              <Tool $w={16} aria-label="Close palette"><Icon name="close" size={8} /></Tool>
              <Tool $w={16} aria-label="Pin palette"><Icon name="pin" size={11} /></Tool>
              <StripTitle>Properties</StripTitle>
              <StripMenu $w={16} aria-label="Palette menu"><Icon name="props" size={13} /></StripMenu>
            </Strip>
            <Palette>
              <SelectionCombo>
                <select aria-label="Selection"><option>Line (2)</option></select>
                <ComboArrow><Icon name="chev" size={8} /></ComboArrow>
              </SelectionCombo>
              <PickRow>
                <Square aria-label="Select all"><Icon name="pickAdd" /></Square>
                <Square aria-label="Select entities"><Icon name="pickLines" /></Square>
                <Square aria-label="Pick"><Icon name="pickMon" /></Square>
                <Square $plain aria-label="Quick select"><Icon name="flash" /></Square>
                <Help>?</Help>
              </PickRow>
              <PaletteBox>
                <PropertyGroup title="General" items={general} height={147} />
                <PropertyGroup title="Geometry" items={geometry} height={180} />
              </PaletteBox>
            </Palette>
            <Docs>
              <TabRow>
                {tabs.map((t, i) => (
                  <DocTab key={t} $active={i === 3}>
                    <DocName>{t}</DocName>
                    <CloseTab aria-label={`Close ${t}`}><Icon name="close" size={10} /></CloseTab>
                  </DocTab>
                ))}
                <NavTab $w={10} aria-label="Previous tab"><Icon name="left" size={7} /></NavTab>
                <NavTab $w={10} aria-label="Next tab"><Icon name="right" size={7} /></NavTab>
                <NavTab $w={18} aria-label="New tab"><Icon name="plus" size={12} /></NavTab>
                <TabList aria-label="Tab list"><Icon name="bigDown" size={13} /></TabList>
              </TabRow>
              <ModelView />
              <SheetRow>
                {sheets.map(([name, w], i) => (
                  <Sheet key={name} $w={w} $active={i === 0}>
                    <svg viewBox="0 0 48 12" preserveAspectRatio="none" aria-hidden="true">
                      <path d="M0 0l4 9q2 3 5 3h29q3 0 5-3l5-9" fill={i === 0 ? '#fff' : '#c4c4c4'} stroke="#222" />
                    </svg>
                    <span>{name}</span>
                  </Sheet>
                ))}
              </SheetRow>
            </Docs>
          </Workspace>
          <CommandHead>
            Command window
            <Tool $w={14} aria-label="Close command window"><Icon name="close" size={8} /></Tool>
          </CommandHead>
          <Splitter />
          <CommandLog>
            <p>Options: <a href="#base"><u>B</u>ase point</a>, <a href="#copy"><u>C</u>opy</a>, <a href="#undo"><u>U</u>ndo</a>, <a href="#exit">e<u>X</u>it</a> or</p>
            <p><strong>Stretch point»</strong></p>
          </CommandLog>
          <Status>
            <StatusText>DraftSight 2017 x64</StatusText>
            <Cluster>
              <Square $plain aria-label="Snap"><Icon name="snap" /></Square>
              <Square $plain aria-label="Grid"><Icon name="grid" /></Square>
              <Square $plain aria-label="Ortho"><Icon name="ortho" /></Square>
            </Cluster>
            <Cluster>
              <Square $on aria-label="Polar"><Icon name="polar" /></Square>
              <Square $on aria-label="ESnap"><Icon name="esnap" /></Square>
              <Square $on aria-label="ETrack"><Icon name="etrack" /></Square>
            </Cluster>
            <Cluster>
              <Annotation>
                <select aria-label="Annotation scale"><option>Annotation</option></select>
                <Icon name="down" size={7} />
              </Annotation>
              <span>(1:1)</span>
            </Cluster>
            <span>(1.3127&lt; 0.0000 0.0000)</span>
          </Status>
        </AppWindow>
      </Desktop>
      <Taskbar>9:53 AM</Taskbar>
    </Page>
  );
}
